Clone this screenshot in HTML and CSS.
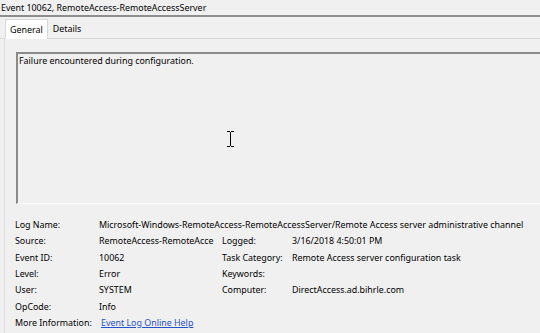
FILE: index.html
```html
<!DOCTYPE html>
<html lang="en">
<head>
    <meta charset="UTF-8">
    <title>Event 10062, RemoteAccess-RemoteAccessServer</title>
    <link rel="stylesheet" href="styles.css">
</head>
<body>
    <div class="title">Event 10062, RemoteAccess-RemoteAccessServer</div>
    <div class="tabs">
        <div class="tab active">General</div>
        <div class="tab">Details</div>
    </div>
    <div class="panel">
        <div class="message">
            Failure encountered during configuration.
            <svg class="ibeam" width="9" height="16" viewBox="0 0 9 16">
                <path d="M1 0.5h3M5 0.5h3M4.5 1v14M1 15.5h3M5 15.5h3" stroke="#000" stroke-width="1" fill="none"/>
            </svg>
        </div>
        <div class="details">
            <div class="label">Log Name:</div>
            <div class="value wide">Microsoft-Windows-RemoteAccess-RemoteAccessServer/Remote Access server administrative channel</div>

            <div class="label">Source:</div>
            <div class="value clip">RemoteAccess-RemoteAcce</div>
            <div class="label">Logged:</div>
            <div class="value">3/16/2018 4:50:01 PM</div>

            <div class="label">Event ID:</div>
            <div class="value">10062</div>
            <div class="label">Task Category:</div>
            <div class="value">Remote Access server configuration task</div>

            <div class="label">Level:</div>
            <div class="value">Error</div>
            <div class="label">Keywords:</div>
            <div class="value"></div>

            <div class="label">User:</div>
            <div class="value">SYSTEM</div>
            <div class="label">Computer:</div>
            <div class="value">DirectAccess.ad.bihrle.com</div>

            <div class="label">OpCode:</div>
            <div class="value wide">Info</div>

            <div class="label">More Information:</div>
            <div class="value wide"><a href="#" class="help">Event Log Online Help</a></div>
        </div>
    </div>
</body>
</html>
```

FILE: styles.css
```css
body {
    margin: 0;
    height: 333px;
    background-color: #f0f0f0;
    color: #000;
    font-family: 'Noto Sans', sans-serif;
    font-size: 8.9px;
    overflow: hidden;
}
.title {
    height: 15px;
    line-height: 15px;
    padding-left: 1px;
    white-space: nowrap;
    border-bottom: 2px solid #8e8e8e;
}
.tabs {
    display: flex;
    height: 21px;
    padding-left: 5px;
    border-bottom: 1px solid #d9d9d9;
    align-items: flex-end;
}
.tab {
    height: 19px;
    line-height: 20px;
    padding: 0 5px;
    box-sizing: border-box;
}
.tab.active {
    height: 20px;
    margin-bottom: -1px;
    background: #ffffff;
    border: 1px solid #d9d9d9;
    border-bottom: none;
    padding: 0 4px 0 4px;
}
.panel {
    border-left: 1px solid #dcdcdc;
    margin-left: 4px;
    padding: 13px 0 0 11px;
    height: 281px;
}
.message {
    position: relative;
    height: 149px;
    border-top: 2px solid #8a8a8a;
    border-left: 2px solid #8a8a8a;
    border-bottom: 1px solid #ffffff;
    padding: 0 0 0 1px;
    line-height: 14px;
}
.ibeam {
    position: absolute;
    left: 208px;
    top: 77px;
}
.details {
    display: grid;
    grid-template-columns: 84px 123px 70px 1fr;
    grid-auto-rows: 16.35px;
    margin: 13px 0 0 -1px;
    line-height: 16.35px;
    white-space: nowrap;
}
.value.wide {
    grid-column: 2 / 5;
}
.value.clip {
    overflow: hidden;
}
.help {
    color: #2450c8;
    margin-left: 2px;
}
```
